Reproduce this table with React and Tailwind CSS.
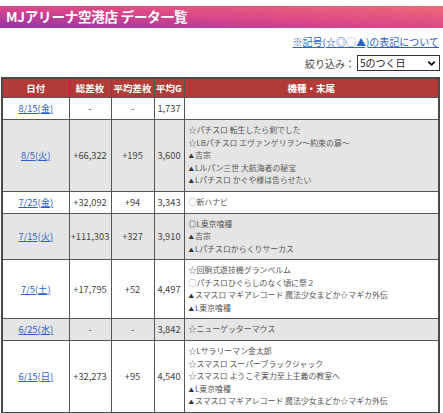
import { ChevronDown } from 'lucide-react'

const rows = [
  { date: '8/15', day: '金', total: '-', avg: '-', games: '1,737', models: [] },
  {
    date: '8/5', day: '火', total: '+66,322', avg: '+195', games: '3,600', gray: true,
    models: [
      '☆パチスロ 転生したら剣でした',
      '☆LBパチスロ エヴァンゲリヲン～約束の扉～',
      '▲吉宗',
      '▲Lルパン三世 大航海者の秘宝',
      '▲Lパチスロ かぐや様は告らせたい',
    ],
  },
  { date: '7/25', day: '金', total: '+32,092', avg: '+94', games: '3,343', models: ['◯新ハナビ'] },
  {
    date: '7/15', day: '火', total: '+111,303', avg: '+327', games: '3,910', gray: true,
    models: ['◎L東京喰種', '▲吉宗', '▲Lパチスロからくりサーカス'],
  },
  {
    date: '7/5', day: '土', total: '+17,795', avg: '+52', games: '4,497',
    models: [
      '☆回胴式遊技機グランベルム',
      '◯パチスロひぐらしのなく頃に祭２',
      '▲スマスロ マギアレコード 魔法少女まどか☆マギカ外伝',
      '▲L東京喰種',
    ],
  },
  { date: '6/25', day: '水', total: '-', avg: '-', games: '3,842', gray: true, models: ['☆ニューゲッターマウス'] },
  {
    date: '6/15', day: '日', total: '+32,273', avg: '+95', games: '4,540',
    models: [
      '☆Lサラリーマン金太郎',
      '☆スマスロ スーパーブラックジャック',
      '☆スマスロ ようこそ実力至上主義の教室へ',
      '▲L東京喰種',
      '▲スマスロ マギアレコード 魔法少女まどか☆マギカ外伝',
    ],
  },
]

const cell = 'border border-[#555] py-[4px] text-center align-middle text-[9.3px] leading-[13px] whitespace-nowrap'

function ModelLine({ text }) {
  // the ▲ mark is drawn smaller than the other marks
  if (text.startsWith('▲')) {
    return (
      <div className="whitespace-nowrap h-[12.5px]">
        <span className="text-[5.5px] leading-none text-[#333] mr-[1px]">▲</span>
        {text.slice(1)}
      </div>
    )
  }
  return <div className="whitespace-nowrap h-[12.5px]">{text}</div>
}

export default function App() {
  return (
    <div className="w-[443px] h-[413px] overflow-hidden bg-white pt-[6px] font-['Noto_Sans_CJK_JP','Noto_Sans',sans-serif] text-[#444]">
      {/* title bar */}
      <div className="h-[22px] flex items-center px-[6px] bg-[linear-gradient(to_top_right,#9134a8,#d8448a_45%,#ef6b76)]">
        <h1 className="text-white font-bold text-[13.5px] leading-none tracking-[-0.2px]">MJアリーナ空港店 データ一覧</h1>
      </div>

      <div className="flex justify-end pr-[4px] mt-[7px]">
        <a href="#" className="text-[10px] leading-[14px] text-[#2b62c8] underline">※記号(☆◎◯▲)の表記について</a>
      </div>

      <div className="flex justify-end items-center gap-[2px] pr-[3px] mt-[6px]">
        <span className="text-[10px] text-[#444]">絞り込み：</span>
        <div className="relative w-[83px] h-[16px] border border-[#333] bg-white flex items-center pl-[2px]">
          <span className="text-[10px] leading-none text-[#222]">5のつく日</span>
          <ChevronDown className="absolute right-[2px] top-[2px] w-[11px] h-[11px] text-black" strokeWidth={3.5} />
        </div>
      </div>

      <table className="mt-[6px] ml-[1px] w-[439px] border-collapse border-2 border-[#4a4a4a] table-fixed">
        <colgroup>
          <col className="w-[67px]" />
          <col className="w-[42px]" />
          <col className="w-[43px]" />
          <col className="w-[30px]" />
          <col />
        </colgroup>
        <thead>
          <tr className="bg-[#b33b37] text-white font-bold text-[9.5px] leading-[12px]">
            <th className="border border-[#555] py-[3px]">日付</th>
            <th className="border border-[#555] py-[3px]">総差枚</th>
            <th className="border border-[#555] py-[3px] whitespace-nowrap">平均差枚</th>
            <th className="border border-[#555] py-[3px] whitespace-nowrap">平均G</th>
            <th className="border border-[#555] py-[3px]">機種・末尾</th>
          </tr>
        </thead>
        <tbody>
          {rows.map((r) => (
            <tr key={r.date} className={r.gray ? 'bg-[#e5e5e5]' : 'bg-white'}>
              <td className={`${cell} px-[3px]`}>
                <a href="#" className="text-[#2b62c8] underline">{r.date}({r.day})</a>
              </td>
              <td className={`${cell} px-0`}>{r.total}</td>
              <td className={`${cell} px-0`}>{r.avg}</td>
              <td className={`${cell} px-0`}>{r.games}</td>
              <td className="border border-[#555] pl-[4px] py-[4px] text-left text-[7.9px] leading-[12.5px] text-[#555]">
                {r.models.map((m, i) => (
                  <ModelLine key={i} text={m} />
                ))}
              </td>
            </tr>
          ))}
        </tbody>
      </table>
    </div>
  )
}
